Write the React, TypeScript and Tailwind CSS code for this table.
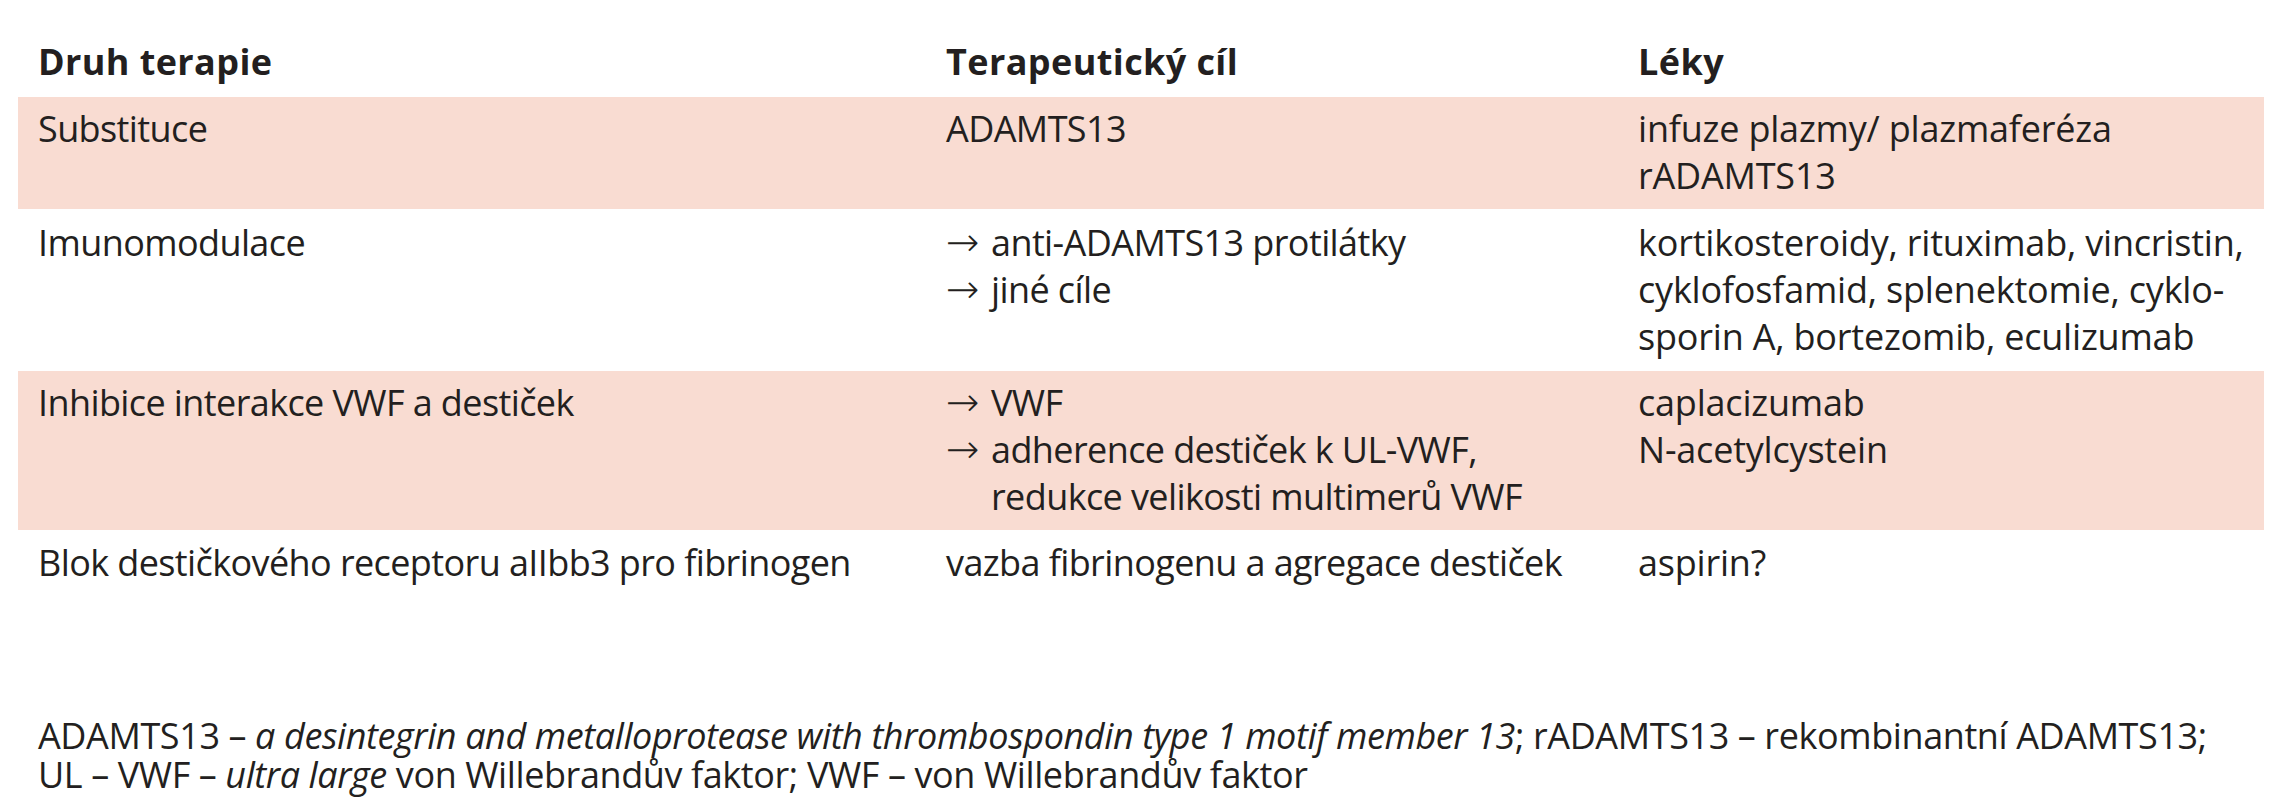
import React from "react";

type C2Line = { arrow?: boolean; indent?: boolean; text: string };
type Row = { pink: boolean; c1: string[]; c2: C2Line[]; c3: string[]; pad: string };

const rows: Row[] = [
  {
    pink: true,
    c1: ["Substituce"],
    c2: [{ text: "ADAMTS13" }],
    c3: ["infuze plazmy/ plazmaferéza", "rADAMTS13"],
    pad: "pt-[8px] pb-[10px]",
  },
  {
    pink: false,
    c1: ["Imunomodulace"],
    c2: [
      { arrow: true, text: "anti-ADAMTS13 protilátky" },
      { arrow: true, text: "jiné cíle" },
    ],
    c3: [
      "kortikosteroidy, rituximab, vincristin,",
      "cyklofosfamid, splenektomie, cyklo-",
      "sporin A, bortezomib, eculizumab",
    ],
    pad: "pt-[10px] pb-[11px]",
  },
  {
    pink: true,
    c1: ["Inhibice interakce VWF a destiček"],
    c2: [
      { arrow: true, text: "VWF" },
      { arrow: true, text: "adherence destiček k UL-VWF," },
      { indent: true, text: "redukce velikosti multimerů VWF" },
    ],
    c3: ["caplacizumab", "N-acetylcystein"],
    pad: "pt-[8px] pb-[10px]",
  },
  {
    pink: false,
    c1: ["Blok destičkového receptoru aIIbb3 pro fibrinogen"],
    c2: [{ text: "vazba fibrinogenu a agregace destiček" }],
    c3: ["aspirin?"],
    pad: "pt-[9px] pb-[8px]",
  },
];

function C2({ line }: { line: C2Line }) {
  if (line.arrow || line.indent) {
    return (
      <div className="flex items-baseline whitespace-nowrap">
        <span className="w-[45px] shrink-0 font-['DejaVu_Sans',sans-serif] text-[40px] font-extralight leading-[47px] tracking-normal">
          {line.arrow ? "→" : ""}
        </span>
        <span>{line.text}</span>
      </div>
    );
  }
  return <div className="whitespace-nowrap">{line.text}</div>;
}

export default function App() {
  return (
    <div className="min-h-[800px] w-[2279px] bg-white pt-[38px] font-['Open_Sans',sans-serif] text-[36px] leading-[47px] tracking-[-0.6px] text-[#231f20]">
      <div className="ml-[18px] w-[2246px]">
        <div className="grid grid-cols-[908px_692px_646px] pb-[12px] font-bold tracking-[0.4px]">
          <div className="pl-[20px]">Druh terapie</div>
          <div className="pl-[20px]">Terapeutický cíl</div>
          <div className="pl-[20px]">Léky</div>
        </div>
        {rows.map((r, i) => (
          <div
            key={i}
            className={`grid grid-cols-[908px_692px_646px] ${r.pad} ${r.pink ? "bg-[#f9dcd2]" : "bg-white"}`}
          >
            <div className="pl-[20px]">
              {r.c1.map((t, j) => (
                <div key={j} className="whitespace-nowrap">{t}</div>
              ))}
            </div>
            <div className="pl-[20px]">
              {r.c2.map((l, j) => (
                <C2 key={j} line={l} />
              ))}
            </div>
            <div className="pl-[20px] tracking-[-0.2px]">
              {r.c3.map((t, j) => (
                <div key={j} className="whitespace-nowrap">{t}</div>
              ))}
            </div>
          </div>
        ))}
      </div>
      <div className="ml-[38px] mt-[122px] whitespace-nowrap leading-[39px] tracking-[-0.4px]">
        <div>
          ADAMTS13 – <i>a desintegrin and metalloprotease with thrombospondin type 1 motif member 13</i>; rADAMTS13 –
          rekombinantní ADAMTS13;
        </div>
        <div>
          UL – VWF – <i>ultra large</i> von Willebrandův faktor; VWF – von Willebrandův faktor
        </div>
      </div>
    </div>
  );
}
